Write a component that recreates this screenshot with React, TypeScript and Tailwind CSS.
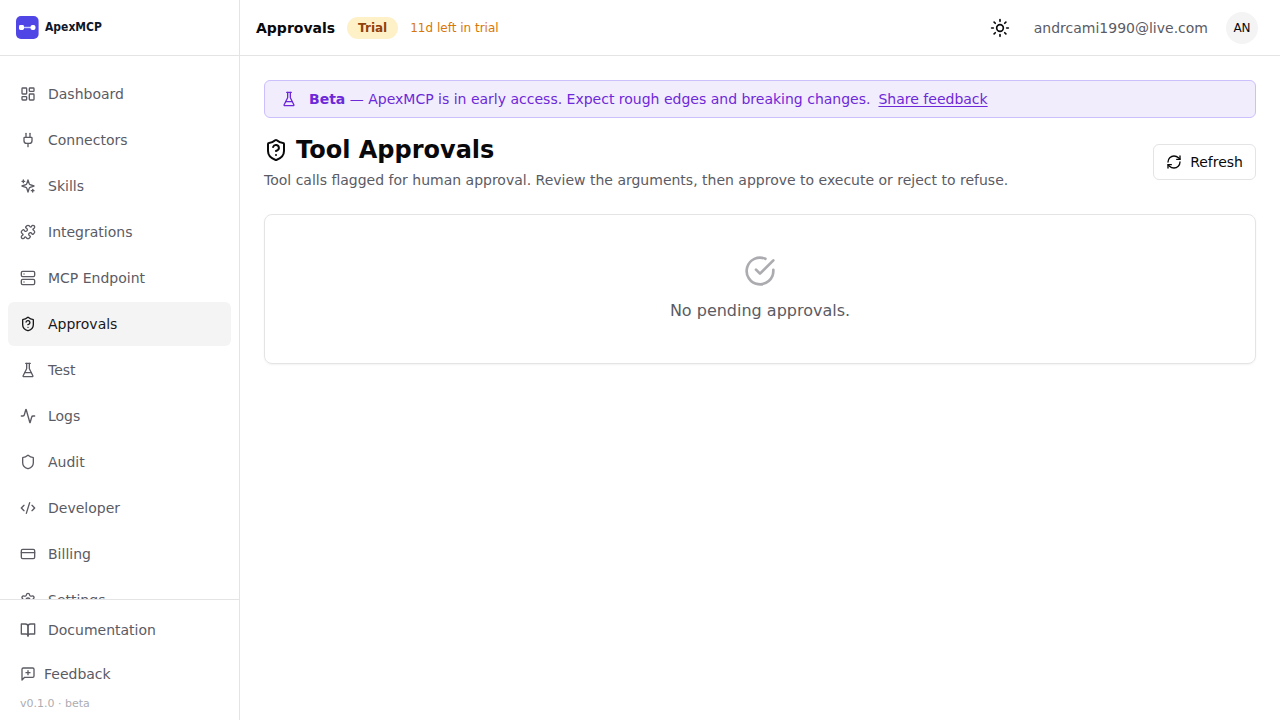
import React from "react";
import {
  Activity, CodeXml, CreditCard, LayoutDashboard, Plug, RefreshCw, Server, Settings,
  Shield, ShieldQuestion, Sun,
} from "lucide-react";

type Icon = React.ComponentType<{ className?: string }>;
type NavItem = { label: string; icon: Icon; active?: boolean };

function strokeIcon(...paths: string[]): Icon {
  return function StrokeIcon({ className }) {
    return (
      <svg
        viewBox="0 0 24 24"
        fill="none"
        stroke="currentColor"
        strokeWidth="2"
        strokeLinecap="round"
        strokeLinejoin="round"
        className={className}
        aria-hidden="true"
      >
        {paths.map((d) => (
          <path key={d} d={d} />
        ))}
      </svg>
    );
  };
}

const Sparkles = strokeIcon(
  "m12 3-1.912 5.813a2 2 0 0 1-1.275 1.275L3 12l5.813 1.912a2 2 0 0 1 1.275 1.275L12 21l1.912-5.813a2 2 0 0 1 1.275-1.275L21 12l-5.813-1.912a2 2 0 0 1-1.275-1.275L12 3Z",
  "M5 3v4",
  "M19 17v4",
  "M3 5h4",
  "M17 19h4",
);
const Flask = strokeIcon(
  "M10 2v7.527a2 2 0 0 1-.211.896L4.72 20.55a1 1 0 0 0 .9 1.45h12.76a1 1 0 0 0 .9-1.45l-5.069-10.127A2 2 0 0 1 14 9.527V2",
  "M8.5 2h7",
  "M7 16h10",
);
const Puzzle = strokeIcon(
  "M19.439 7.85c-.049.322.059.648.289.878l1.568 1.568c.47.47.706 1.087.706 1.704s-.235 1.233-.706 1.704l-1.611 1.611a.98.98 0 0 1-.837.276c-.47-.07-.802-.48-.968-.925a2.501 2.501 0 1 0-3.214 3.214c.446.166.855.497.925.968a.979.979 0 0 1-.276.837l-1.61 1.61a2.404 2.404 0 0 1-1.705.707 2.402 2.402 0 0 1-1.704-.706l-1.568-1.568a1.026 1.026 0 0 0-.877-.29c-.493.074-.84.504-1.02.968a2.5 2.5 0 1 1-3.237-3.237c.464-.18.894-.527.967-1.02a1.026 1.026 0 0 0-.289-.877l-1.568-1.568A2.402 2.402 0 0 1 1.998 12c0-.617.236-1.234.706-1.704L4.23 8.77c.24-.24.581-.353.917-.303.515.077.877.528 1.073 1.01a2.5 2.5 0 1 0 3.259-3.259c-.482-.196-.933-.558-1.01-1.073-.05-.336.062-.676.303-.917l1.525-1.525A2.402 2.402 0 0 1 12 1.998c.617 0 1.234.236 1.704.706l1.568 1.568c.23.23.556.338.877.29.493-.074.84-.504 1.02-.968a2.5 2.5 0 1 1 3.237 3.237c-.464.18-.894.527-.967 1.02Z",
);
const BookOpen = strokeIcon(
  "M2 3h6a4 4 0 0 1 4 4v14a3 3 0 0 0-3-3H2z",
  "M22 3h-6a4 4 0 0 0-4 4v14a3 3 0 0 1 3-3h7z",
);
const FeedbackIcon = strokeIcon(
  "M21 15a2 2 0 0 1-2 2H7l-4 4V5a2 2 0 0 1 2-2h14a2 2 0 0 1 2 2z",
  "M12 7v6",
  "M9 10h6",
);
const CheckCircle = strokeIcon("M22 11.08V12a10 10 0 1 1-5.93-9.14", "m9 11 3 3L22 4");

const navItems: NavItem[] = [
  { label: "Dashboard", icon: LayoutDashboard },
  { label: "Connectors", icon: Plug },
  { label: "Skills", icon: Sparkles },
  { label: "Integrations", icon: Puzzle },
  { label: "MCP Endpoint", icon: Server },
  { label: "Approvals", icon: ShieldQuestion, active: true },
  { label: "Test", icon: Flask },
  { label: "Logs", icon: Activity },
  { label: "Audit", icon: Shield },
  { label: "Developer", icon: CodeXml },
  { label: "Billing", icon: CreditCard },
  { label: "Settings", icon: Settings },
];

function NavLink({ label, icon: Icon, active }: NavItem) {
  return (
    <a
      href="#"
      aria-current={active ? "page" : undefined}
      className={
        active
          ? "flex h-11 shrink-0 items-center gap-3 rounded-md bg-zinc-100 px-3 text-sm text-zinc-900"
          : "flex h-11 shrink-0 items-center gap-3 rounded-md px-3 text-sm text-[#5b5b64]"
      }
    >
      <Icon className="size-4" />
      {label}
    </a>
  );
}

function Logo() {
  return (
    <a href="#" className="flex items-center gap-1.5">
      <svg viewBox="0 0 23 23" className="size-[23px]" aria-hidden="true">
        <rect width="22.6" height="23" rx="5" fill="#4f46e5" />
        <path d="M7 11.5h9" stroke="#c7d2fe" strokeWidth="1.4" />
        <rect x="3" y="9" width="5" height="5" rx="1.4" fill="#fff" />
        <rect x="14.5" y="9" width="5" height="5" rx="2" fill="#fff" />
      </svg>
      <span className="pb-0.5 font-['DejaVu_Sans_Condensed','DejaVu_Sans',sans-serif] text-xs font-bold text-slate-900">
        ApexMCP
      </span>
    </a>
  );
}

export default function App() {
  return (
    <div className="flex h-screen bg-white font-['DejaVu_Sans',sans-serif] text-zinc-950">
      <aside className="flex w-60 shrink-0 flex-col border-r border-[#e4e4e7]">
        <div className="flex h-14 shrink-0 items-center border-b border-[#e4e4e7] px-4">
          <Logo />
        </div>
        <nav aria-label="Main" className="flex min-h-0 flex-1 flex-col gap-0.5 overflow-x-hidden overflow-y-auto px-2 pt-4 [scrollbar-width:none]">
          {navItems.map((item) => (
            <NavLink key={item.label} {...item} />
          ))}
        </nav>
        <div className="flex shrink-0 flex-col border-t border-[#e4e4e7] p-2">
          <NavLink label="Documentation" icon={BookOpen} />
          <button type="button" className="flex h-11 items-center gap-2 px-3 text-sm text-[#5b5b64]">
            <FeedbackIcon className="size-4" />
            Feedback
          </button>
          <p className="px-3 text-[11px] leading-4 text-[#adadb1]">v0.1.0 · beta</p>
        </div>
      </aside>

      <div className="flex min-w-0 flex-1 flex-col">
        <header className="flex h-14 shrink-0 items-center justify-between border-b border-[#e4e4e7] pr-[22px] pl-4">
          <div className="flex items-center gap-3">
            <span className="text-sm font-bold">Approvals</span>
            <span className="rounded-full bg-[#fef0c7] px-[11px] py-[3px] text-xs font-bold text-[#92400e]">Trial</span>
            <span className="text-xs text-[#d97706]">11d left in trial</span>
          </div>
          <div className="flex items-center">
            <button type="button" aria-label="Toggle theme" className="flex size-9 items-center justify-center">
              <Sun className="size-5" />
            </button>
            <span className="ml-4 text-sm text-[#5b5b64]">andrcami1990@live.com</span>
            <button type="button" className="ml-[18px] flex size-8 items-center justify-center rounded-full bg-zinc-100 text-xs">
              AN
            </button>
          </div>
        </header>

        <main className="flex flex-col p-6">
          <div className="flex items-center gap-3 rounded-md border border-[#cdbffb] bg-[#f2edfd] px-4 py-2 text-sm text-[#6d28d9]">
            <Flask className="size-4" />
            <p>
              <strong className="font-bold">Beta</strong> — ApexMCP is in early access. Expect rough edges and breaking changes.
              <a href="#" className="ml-2 underline underline-offset-2">Share feedback</a>
            </p>
          </div>

          <div className="mt-4 flex items-center justify-between">
            <div>
              <h1 className="flex items-center gap-2 text-2xl font-bold">
                <ShieldQuestion className="size-6" />
                Tool Approvals
              </h1>
              <p className="mt-1 text-sm text-[#5b5b64]">
                Tool calls flagged for human approval. Review the arguments, then approve to execute or reject to refuse.
              </p>
            </div>
            <button type="button" className="flex h-9 items-center gap-2 rounded-md border border-[#e4e4e7] px-3 text-sm">
              <RefreshCw className="size-4" />
              Refresh
            </button>
          </div>

          <section className="mt-6 flex flex-col items-center gap-3 rounded-lg border border-[#e4e4e7] py-10 text-[#5b5b64] shadow-xs">
            <CheckCircle className="size-8 opacity-50" />
            <p>No pending approvals.</p>
          </section>
        </main>
      </div>
    </div>
  );
}
